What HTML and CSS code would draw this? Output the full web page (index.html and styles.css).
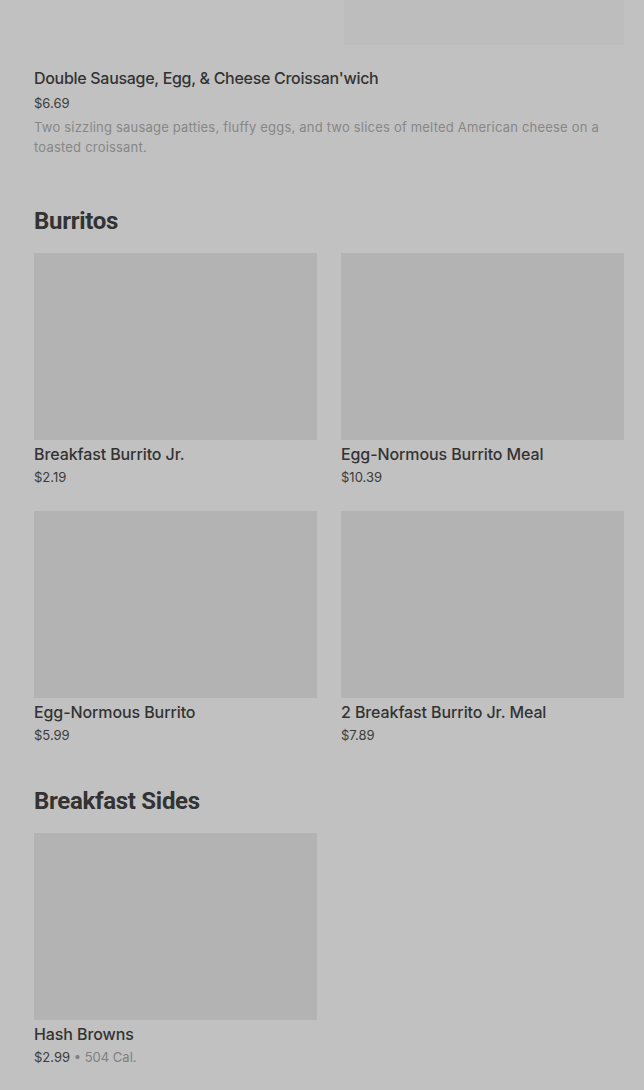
FILE: index.html
```html
<!DOCTYPE html>
<html>

<head>
    <title>Menu</title>
    <link rel="stylesheet" href="styles.css">
</head>

<body>
    <div class="menu">

        <div class="featured">
            <div class="featured-photo"></div>
            <p class="item-title">Double Sausage, Egg, &amp; Cheese Croissan'wich</p>
            <p class="item-price">$6.69</p>
            <p class="item-desc">Two sizzling sausage patties, fluffy eggs, and two slices of melted American cheese on a toasted croissant.</p>
        </div>

        <h2 class="section-title">Burritos</h2>
        <div class="item-grid">
            <div class="item">
                <div class="item-photo"></div>
                <p class="item-title">Breakfast Burrito Jr.</p>
                <p class="item-price">$2.19</p>
            </div>
            <div class="item">
                <div class="item-photo"></div>
                <p class="item-title">Egg-Normous Burrito Meal</p>
                <p class="item-price">$10.39</p>
            </div>
            <div class="item">
                <div class="item-photo"></div>
                <p class="item-title">Egg-Normous Burrito</p>
                <p class="item-price">$5.99</p>
            </div>
            <div class="item">
                <div class="item-photo"></div>
                <p class="item-title">2 Breakfast Burrito Jr. Meal</p>
                <p class="item-price">$7.89</p>
            </div>
        </div>

        <h2 class="section-title">Breakfast Sides</h2>
        <div class="item-grid">
            <div class="item">
                <div class="item-photo"></div>
                <p class="item-title">Hash Browns</p>
                <p class="item-price">$2.99 <span class="item-cal">&bull; 504 Cal.</span></p>
            </div>
        </div>

    </div>
</body>

</html>
```

FILE: styles.css
```css
body {
    margin: 0;
    padding: 0;
    font-family: Inter, "Liberation Sans", sans-serif;
    background-color: rgb(193, 193, 193);
    color: rgb(51, 51, 51);
}

.menu {
    padding: 0 20px 0 34px;
}

p {
    margin: 0;
}

.featured-photo {
    width: 280px;
    height: 45px;
    margin-left: auto;
    background-color: rgb(189, 189, 189);
}

.featured .item-title {
    margin-top: 21px;
    letter-spacing: -0.3px;
}

.featured .item-price {
    margin-top: 3px;
}

.item-title {
    font-size: 16px;
    line-height: 24px;
    font-weight: 500;
    letter-spacing: -0.1px;
}

.item-price {
    margin-top: 1px;
    font-size: 13px;
    line-height: 20px;
    color: rgb(60, 60, 60);
}

.item-desc {
    margin-top: 4px;
    font-size: 13px;
    line-height: 20px;
    letter-spacing: 0.2px;
    color: rgb(135, 135, 135);
}

.item-cal {
    color: rgb(128, 128, 128);
}

.section-title {
    margin: 48px 0 16px;
    font-family: Roboto, "Liberation Sans", sans-serif;
    font-size: 24px;
    line-height: 32px;
    font-weight: 700;
    letter-spacing: -0.3px;
}

.item-grid {
    display: grid;
    grid-template-columns: 1fr 1fr;
    column-gap: 24px;
    row-gap: 24px;
}

.item-photo {
    height: 187px;
    background-color: rgb(179, 179, 179);
    margin-bottom: 3px;
}

.item .item-title {
    line-height: 22px;
}

.item .item-price {
    margin-top: 2px;
}

.item-grid + .section-title {
    margin-top: 40px;
}
```
